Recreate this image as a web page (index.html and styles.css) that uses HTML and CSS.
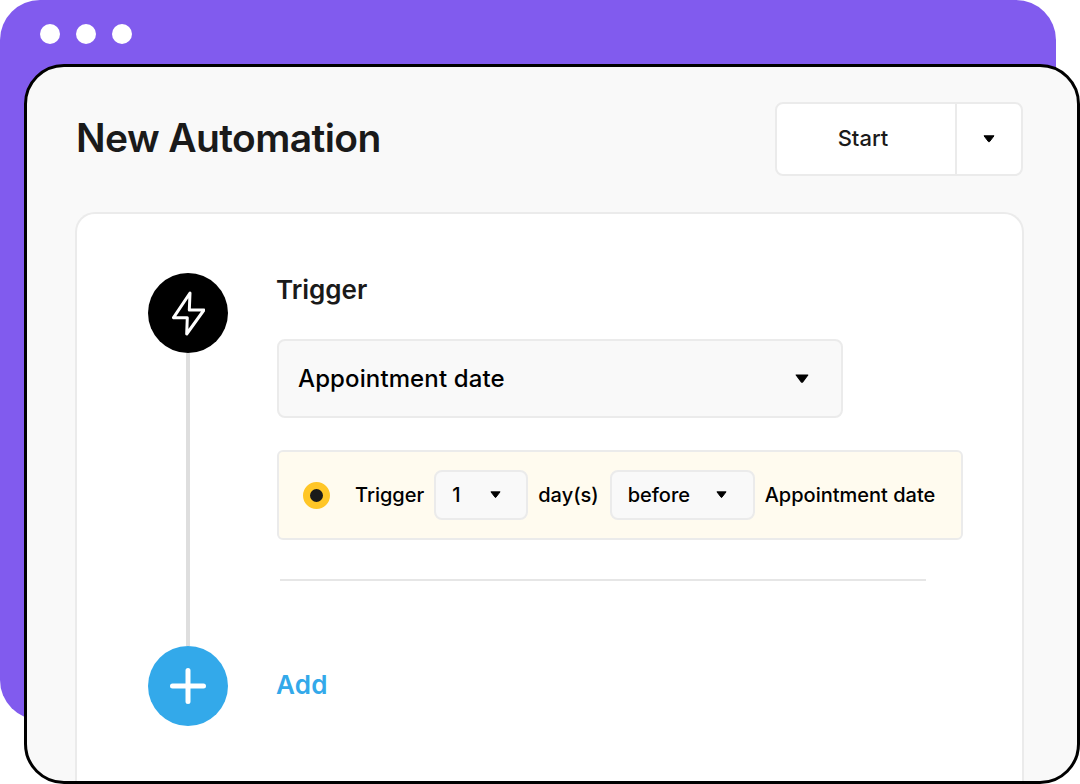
FILE: index.html
```html
<!DOCTYPE html>
<html lang="en">
<head>
<meta charset="utf-8">
<title>New Automation</title>
<link rel="stylesheet" href="styles.css">
</head>
<body>
<div class="stage">
  <div class="backdrop">
    <span class="dot"></span><span class="dot"></span><span class="dot"></span>
  </div>
  <main class="window">
    <header class="head">
      <h1 class="title">New Automation</h1>
      <div class="split">
        <span class="split-main">Start</span>
        <span class="split-side"><svg class="caret" viewBox="0 0 12 8"><path d="M1 .8h10L6.6 6.6q-.6.6-1.2 0z"/></svg></span>
      </div>
    </header>
    <section class="card">
      <div class="rail">
        <div class="node node-dark">
          <svg class="bolt" viewBox="0 0 34 45"><path d="M19 2 2.5 26.7h13.8L15.7 43 33 19H18.3z"/></svg>
        </div>
        <div class="line"></div>
        <div class="node node-blue">
          <svg class="plus" viewBox="0 0 36 36"><path d="M18 2.5v31M2.500 18h31"/></svg>
        </div>
      </div>
      <div class="body">
        <h2 class="label">Trigger</h2>
        <div class="select">
          <span>Appointment date</span>
          <svg class="caret" viewBox="0 0 12 8"><path d="M1 .8h10L6.600 6.600q-.6.6-1.2 0z"/></svg>
        </div>
        <div class="panel">
          <span class="radio"></span>
          <span class="word first">Trigger</span>
          <span class="mini mini-num">1<svg class="caret" viewBox="0 0 12 8"><path d="M1 .8h10L6.600 6.600q-.6.6-1.2 0z"/></svg></span>
          <span class="word">day(s)</span>
          <span class="mini mini-when">before<svg class="caret" viewBox="0 0 12 8"><path d="M1 .8h10L6.600 6.600q-.6.6-1.2 0z"/></svg></span>
          <span class="word">Appointment date</span>
        </div>
        <hr class="rule">
        <div class="add">Add</div>
      </div>
    </section>
  </main>
</div>
</body>
</html>
```

FILE: styles.css
```css
* { box-sizing: border-box; }
html, body { margin: 0; height: 100%; background: #fff; }
body { font-family: Inter, "Liberation Sans", sans-serif; color: #1a1a1a; overflow: hidden; }

.stage { position: relative; width: 1080px; height: 784px; overflow: hidden; }

.backdrop {
  position: absolute; left: 0; top: 0;
  width: 1056px; height: 720px;
  background: #815bee;
  border-radius: 40px;
  display: flex; gap: 16px;
  padding: 24px 40px;
}
.dot { width: 20px; height: 20px; border-radius: 50%; background: #fff; }

.window {
  position: absolute; left: 24px; top: 64px;
  width: 1056px; height: 720px;
  background: #f9f9f9;
  border: 3px solid #000;
  border-radius: 40px;
  padding: 35px 54px 0 48px;
  overflow: hidden;
  display: flex; flex-direction: column;
}

.head { display: flex; justify-content: space-between; align-items: flex-start; height: 110px; flex: none; }
.title { margin: 14px 0 0 1px; font-size: 39px; line-height: 44px; font-weight: 600; letter-spacing: -0.6px; color: #1a1a1a; }

.split {
  display: flex; width: 248px; height: 74px;
  background: #fff; border: 2px solid #ebebeb; border-radius: 8px;
  font-size: 22px; font-weight: 500;
}
.split-main { flex: 1; display: flex; align-items: center; justify-content: center; padding: 0 6px 2px 0; }
.split-side { width: 66px; display: flex; align-items: center; justify-content: center; border-left: 2px solid #ebebeb; }

.caret { width: 12px; height: 8px; fill: #000; stroke: #000; stroke-width: 1; stroke-linejoin: round; flex: none; }

.card {
  flex: 1; min-height: 0;
  margin-right: -1px;
  background: #fff;
  border: 2px solid #ebebeb;
  border-bottom: 0;
  border-radius: 20px 20px 0 0;
  padding: 59px 0 0 71px;
  display: flex; gap: 49px;
}

.rail { width: 80px; height: 453px; display: flex; flex-direction: column; align-items: center; flex: none; }
.node { width: 80px; height: 80px; border-radius: 50%; display: flex; align-items: center; justify-content: center; flex: none; }
.node-dark { background: #000; }
.node-blue { background: #33a9ea; }
.line { width: 4px; flex: 1; background: #dedede; }
.bolt { width: 34px; height: 45px; fill: none; stroke: #fff; stroke-width: 3; stroke-linejoin: round; stroke-linecap: round; }
.plus { width: 36px; height: 36px; fill: none; stroke: #fff; stroke-width: 5; stroke-linecap: round; }

.body { width: 687px; flex: none; display: flex; flex-direction: column; align-items: flex-start; }
.label { margin: 1px 0 0 -1px; font-size: 26px; line-height: 32px; font-weight: 600; letter-spacing: 0; color: #1a1a1a; }

.select {
  margin-top: 33px;
  width: 566px; height: 79px;
  display: flex; align-items: center; justify-content: space-between;
  padding: 0 32px 0 19px;
  background: #f9f9f9; border: 2px solid #ebebeb; border-radius: 8px;
  font-size: 24px; font-weight: 500; color: #000; letter-spacing: 0.12px;
}
.select .caret { width: 14px; height: 9.5px; }

.panel {
  margin-top: 32px;
  width: 686px; height: 90px;
  display: flex; align-items: center;
  padding-left: 24px;
  background: #fffbef; border: 2px solid #ebebeb; border-radius: 6px;
  font-size: 20px; font-weight: 500; color: #000;
}
.radio {
  width: 27px; height: 27px; border-radius: 50%;
  background: #1a1a1a; border: 7px solid #ffc627; flex: none;
}
.word { margin-left: 10px; white-space: nowrap; }
.word.first { margin-left: 25px; }
.mini {
  margin-left: 11px;
  height: 50px;
  display: flex; align-items: center; justify-content: space-between;
  background: #f9f9f9; border: 2px solid #ebebeb; border-radius: 8px;
}
.mini .caret { width: 11px; height: 7.5px; }
.mini-num { margin-left: 10px; width: 94px; padding: 0 25px 0 16px; }
.mini-when { width: 145px; padding: 0 26px 0 16px; }

.rule { margin: 39px 0 0 3px; width: 646px; height: 2px; border: 0; background: #e6e6e6; }
.add { margin: 88px 0 0 -1px; font-size: 26px; line-height: 32px; font-weight: 600; color: #33a9ea; letter-spacing: 0.2px; }
```
